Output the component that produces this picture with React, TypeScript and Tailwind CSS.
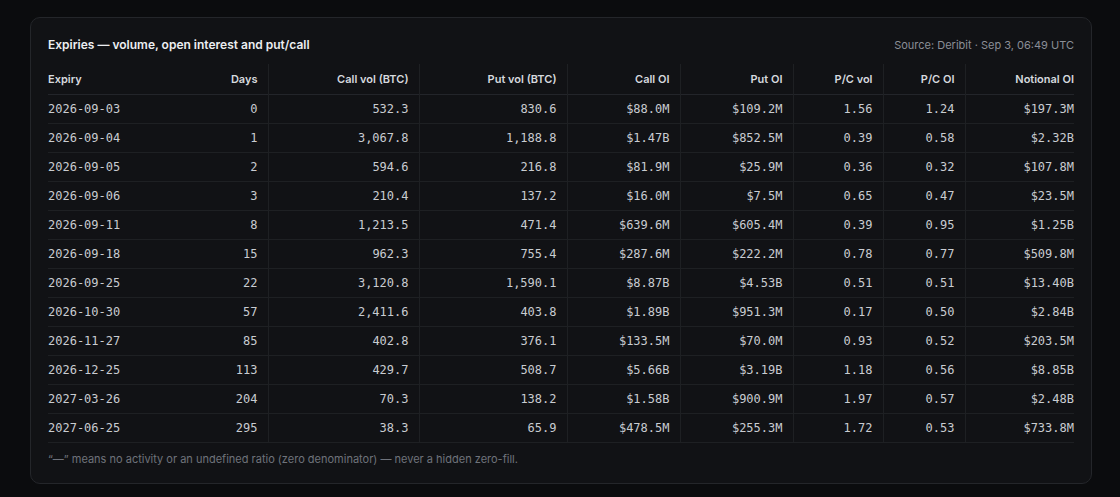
const rows = [
  ["2026-09-03", "0", "532.3", "830.6", "$88.0M", "$109.2M", "1.56", "1.24", "$197.3M"],
  ["2026-09-04", "1", "3,067.8", "1,188.8", "$1.47B", "$852.5M", "0.39", "0.58", "$2.32B"],
  ["2026-09-05", "2", "594.6", "216.8", "$81.9M", "$25.9M", "0.36", "0.32", "$107.8M"],
  ["2026-09-06", "3", "210.4", "137.2", "$16.0M", "$7.5M", "0.65", "0.47", "$23.5M"],
  ["2026-09-11", "8", "1,213.5", "471.4", "$639.6M", "$605.4M", "0.39", "0.95", "$1.25B"],
  ["2026-09-18", "15", "962.3", "755.4", "$287.6M", "$222.2M", "0.78", "0.77", "$509.8M"],
  ["2026-09-25", "22", "3,120.8", "1,590.1", "$8.87B", "$4.53B", "0.51", "0.51", "$13.40B"],
  ["2026-10-30", "57", "2,411.6", "403.8", "$1.89B", "$951.3M", "0.17", "0.50", "$2.84B"],
  ["2026-11-27", "85", "402.8", "376.1", "$133.5M", "$70.0M", "0.93", "0.52", "$203.5M"],
  ["2026-12-25", "113", "429.7", "508.7", "$5.66B", "$3.19B", "1.18", "0.56", "$8.85B"],
  ["2027-03-26", "204", "70.3", "138.2", "$1.58B", "$900.9M", "1.97", "0.57", "$2.48B"],
  ["2027-06-25", "295", "38.3", "65.9", "$478.5M", "$255.3M", "1.72", "0.53", "$733.8M"],
];

const headers = ["Expiry", "Days", "Call vol (BTC)", "Put vol (BTC)", "Call OI", "Put OI", "P/C vol", "P/C OI", "Notional OI"];
const widths = ["w-[150px]", "w-[70px]", "w-[151px]", "w-[148px]", "w-[113px]", "w-[113px]", "w-[90px]", "w-[82px]", "w-[109px]"];

function cellCls(i: number) {
  if (i === 0) return "text-left pl-0 pr-[10px]";
  if (i === 8) return "text-right pl-[10px] pr-0";
  return "text-right px-[10px] border-r border-[#1e2023]";
}

export default function App() {
  return (
    <div className="min-h-[497px] bg-[#0b0c0e] pl-[30px] pt-[17px]" style={{ fontFamily: "Inter, 'Noto Sans', sans-serif" }}>
      <div className="w-[1062px] h-[467px] rounded-[10px] border border-[#24262a] bg-[#111215] px-[17px] pt-[17px]">
        <div className="flex items-center justify-between h-[20px]">
          <h2 className="text-[12px] font-semibold text-[#eceef1]">
            Expiries — volume, open interest and put/call
          </h2>
          <span className="text-[11px] text-[#8a8e96]">Source: Deribit · Sep 3, 06:49 UTC</span>
        </div>

        <table className="mt-[9px] table-fixed border-collapse w-[1026px]">
          <colgroup>
            {widths.map((w, i) => (
              <col key={i} className={w} />
            ))}
          </colgroup>
          <thead>
            <tr className="h-[30px] border-b border-[#23252a]">
              {headers.map((h, i) => (
                <th key={h} className={`${cellCls(i)} text-[11px] font-semibold text-[#d6d9de] align-middle`}>
                  {h}
                </th>
              ))}
            </tr>
          </thead>
          <tbody>
            {rows.map((r) => (
              <tr key={r[0]} className="h-[29px] border-b border-[#1e2023]">
                {r.map((c, i) => (
                  <td
                    key={i}
                    className={`${cellCls(i)} text-[12px] text-[#c9ccd1] align-middle`}
                    style={{ fontFamily: "'DejaVu Sans Mono', monospace" }}
                  >
                    {c}
                  </td>
                ))}
              </tr>
            ))}
          </tbody>
        </table>

        <p className="mt-[8px] text-[11px] text-[#6f737b]">
          “—” means no activity or an undefined ratio (zero denominator) — never a hidden zero-fill.
        </p>
      </div>
    </div>
  );
}
